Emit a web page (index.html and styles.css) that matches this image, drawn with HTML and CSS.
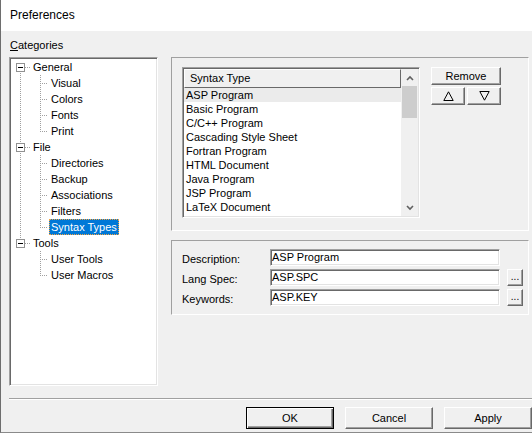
FILE: index.html
```html
<!DOCTYPE html>
<html lang="en">
  <head>
    <meta charset="UTF-8" />
    <title>Preferences</title>
    <link rel="stylesheet" href="styles.css">
  </head>
  <body>
    <div class="window">
      <div class="titlebar">Preferences</div>

      <div class="content">
        <div class="left">
          <div class="caption"><u>C</u>ategories</div>
          <div class="tree">
            <div class="node top first"><span class="tw"><span class="box"></span></span><span class="lbl">General</span></div>
            <div class="node"><span class="pipe"></span><span class="br"></span><span class="lbl">Visual</span></div>
            <div class="node"><span class="pipe"></span><span class="br"></span><span class="lbl">Colors</span></div>
            <div class="node"><span class="pipe"></span><span class="br"></span><span class="lbl">Fonts</span></div>
            <div class="node"><span class="pipe"></span><span class="br end"></span><span class="lbl">Print</span></div>
            <div class="node top"><span class="tw"><span class="box"></span></span><span class="lbl">File</span></div>
            <div class="node"><span class="pipe"></span><span class="br"></span><span class="lbl">Directories</span></div>
            <div class="node"><span class="pipe"></span><span class="br"></span><span class="lbl">Backup</span></div>
            <div class="node"><span class="pipe"></span><span class="br"></span><span class="lbl">Associations</span></div>
            <div class="node"><span class="pipe"></span><span class="br"></span><span class="lbl">Filters</span></div>
            <div class="node"><span class="pipe"></span><span class="br end"></span><span class="lbl selected">Syntax Types</span></div>
            <div class="node top last"><span class="tw"><span class="box"></span></span><span class="lbl">Tools</span></div>
            <div class="node"><span class="pipe none"></span><span class="br"></span><span class="lbl">User Tools</span></div>
            <div class="node"><span class="pipe none"></span><span class="br end"></span><span class="lbl">User Macros</span></div>
          </div>
        </div>

        <div class="right">
          <div class="panel panel-list">
            <div class="list">
              <div class="list-body">
                <div class="list-header">Syntax Type</div>
                <div class="item sel">ASP Program</div>
                <div class="item">Basic Program</div>
                <div class="item">C/C++ Program</div>
                <div class="item">Cascading Style Sheet</div>
                <div class="item">Fortran Program</div>
                <div class="item">HTML Document</div>
                <div class="item">Java Program</div>
                <div class="item">JSP Program</div>
                <div class="item">LaTeX Document</div>
                <div class="item">Modula-2 Program</div>
                <div class="item">Pascal Program</div>
              </div>
              <div class="scroll">
                <div class="arrow">
                  <svg width="8" height="6" viewBox="0 0 8 6"><path d="M1 5 L4 2 L7 5" fill="none" stroke="#606060" stroke-width="1.6"/></svg>
                </div>
                <div class="track"><div class="thumb"></div></div>
                <div class="arrow">
                  <svg width="8" height="6" viewBox="0 0 8 6"><path d="M1 1 L4 4 L7 1" fill="none" stroke="#606060" stroke-width="1.6"/></svg>
                </div>
              </div>
            </div>
            <div class="btncol">
              <button class="btn remove">Remove</button>
              <div class="btnrow">
                <button class="btn small">
                  <svg width="11" height="10" viewBox="0 0 11 10"><path d="M5.5 0.8 L10.2 9.5 L0.8 9.5 Z" fill="none" stroke="#000" stroke-width="1"/></svg>
                </button>
                <button class="btn small">
                  <svg width="11" height="10" viewBox="0 0 11 10"><path d="M0.8 0.5 L10.2 0.5 L5.5 9.2 Z" fill="none" stroke="#000" stroke-width="1"/></svg>
                </button>
              </div>
            </div>
          </div>

          <div class="panel panel-fields">
            <div class="field">
              <label>Description:</label>
              <div class="input">ASP Program</div>
            </div>
            <div class="field">
              <label>Lang Spec:</label>
              <div class="input">ASP.SPC</div>
              <button class="btn dots">...</button>
            </div>
            <div class="field">
              <label>Keywords:</label>
              <div class="input">ASP.KEY</div>
              <button class="btn dots">...</button>
            </div>
          </div>
        </div>
      </div>

      <div class="sep"></div>

      <div class="footer">
        <button class="btn action default">OK</button>
        <button class="btn action">Cancel</button>
        <button class="btn action">Apply</button>
      </div>
    </div>
  </body>
</html>
```

FILE: styles.css
```css
* {
  margin: 0;
  padding: 0;
  box-sizing: border-box;
}
body {
  font-family: "Liberation Sans", Arial, sans-serif;
  font-size: 11px;
  color: #000;
  background: #f0f0f0;
}
.window {
  width: 532px;
  height: 433px;
  display: flex;
  flex-direction: column;
  overflow: hidden;
  border-left: 1px solid #6e6e6e;
  border-bottom: 1px solid #8a8a8a;
}
.titlebar {
  height: 31px;
  flex: none;
  line-height: 30px;
  padding-left: 9px;
  font-size: 12px;
  background: #fff;
}
.content {
  height: 367px;
  flex: none;
  display: flex;
  gap: 13px;
  padding: 7px 0 0 8px;
}
.left {
  width: 149px;
  flex: none;
}
.caption {
  height: 14px;
  line-height: 14px;
  margin-bottom: 5px;
  padding-left: 1px;
}
.tree {
  height: 329px;
  padding: 1px;
  background: #fff;
  border: 1px solid;
  border-color: #a0a0a0 #fff #fff #a0a0a0;
  box-shadow: inset 1px 1px #696969, inset -1px -1px #e3e3e3;
}
.node {
  display: flex;
  align-items: center;
  height: 16px;
  white-space: nowrap;
}
.tw,
.pipe,
.br {
  height: 16px;
  flex: none;
  background-repeat: no-repeat;
}
.tw {
  width: 20px;
  display: flex;
  align-items: center;
  padding-left: 5px;
  background-image: repeating-linear-gradient(to bottom, #a0a0a0 0 1px, transparent 1px 2px),
    repeating-linear-gradient(to right, #a0a0a0 0 1px, transparent 1px 2px);
  background-size: 1px 16px, 6px 1px;
  background-position: 9px 0, 14px 8px;
}
.first .tw {
  background-size: 1px 8px, 6px 1px;
  background-position: 9px 8px, 14px 8px;
}
.last .tw {
  background-size: 1px 8px, 6px 1px;
  background-position: 9px 0, 14px 8px;
}
.box {
  width: 9px;
  height: 9px;
  border: 1px solid #919191;
  background: linear-gradient(#000, #000) center / 5px 1px no-repeat, #fff;
}
.pipe {
  width: 20px;
  background-image: repeating-linear-gradient(to bottom, #a0a0a0 0 1px, transparent 1px 2px);
  background-size: 1px 16px;
  background-position: 9px 0;
}
.pipe.none {
  background: none;
}
.br {
  width: 18px;
  background-image: repeating-linear-gradient(to bottom, #a0a0a0 0 1px, transparent 1px 2px),
    repeating-linear-gradient(to right, #a0a0a0 0 1px, transparent 1px 2px);
  background-size: 1px 16px, 8px 1px;
  background-position: 9px 0, 9px 8px;
}
.br.end {
  background-size: 1px 9px, 8px 1px;
}
.lbl {
  padding: 0 2px;
  line-height: 16px;
  height: 16px;
}
.lbl.selected {
  background: #0078d7;
  color: #fff;
  outline: 1px dotted #f7a440;
  outline-offset: -1px;
}

.right {
  width: 358px;
  flex: none;
  display: flex;
  flex-direction: column;
  gap: 9px;
  padding-top: 19px;
}
.panel {
  border: 1px solid;
  border-color: #a0a0a0 #fff #fff #a0a0a0;
}
.panel-list {
  height: 174px;
  display: flex;
  align-items: flex-start;
  gap: 11px;
  padding: 9px 0 0 10px;
}
.list {
  width: 238px;
  height: 151px;
  display: flex;
  padding: 1px;
  background: #fff;
  border: 1px solid;
  border-color: #a0a0a0 #fff #fff #a0a0a0;
  box-shadow: inset 1px 1px #696969, inset -1px -1px #e3e3e3;
}
.list-body {
  flex: 1;
  overflow: hidden;
}
.list-header {
  height: 19px;
  line-height: 17px;
  padding-left: 5px;
  background: #f0f0f0;
  border: 1px solid;
  border-color: #fff #696969 #696969 #fff;
}
.item {
  height: 14px;
  line-height: 14px;
  padding-left: 2px;
  white-space: nowrap;
}
.item.sel {
  background: #ebebeb;
}
.scroll {
  width: 17px;
  flex: none;
  display: flex;
  flex-direction: column;
  background: #f0f0f0;
}
.arrow {
  height: 17px;
  display: flex;
  align-items: center;
  justify-content: center;
}
.track {
  flex: 1;
}
.thumb {
  height: 32px;
  margin: 0 1px;
  background: #cdcdcd;
}

.btn {
  font: inherit;
  color: #000;
  background: #f0f0f0;
  border: 1px solid;
  border-color: #fff #696969 #696969 #fff;
  box-shadow: inset -1px -1px #a0a0a0;
  display: flex;
  align-items: center;
  justify-content: center;
}
.btncol {
  width: 70px;
  display: flex;
  flex-direction: column;
  gap: 2px;
}
.remove {
  height: 18px;
}
.btnrow {
  display: flex;
  gap: 2px;
}
.small {
  width: 34px;
  height: 18px;
}

.panel-fields {
  height: 75px;
  display: flex;
  flex-direction: column;
  gap: 3px;
  padding: 8px 0 0 10px;
}
.field {
  height: 17px;
  display: flex;
  align-items: center;
}
.field label {
  width: 88px;
  padding-top: 3px;
}
.input {
  width: 230px;
  height: 17px;
  line-height: 15px;
  padding-left: 1px;
  background: #fff;
  border: 1px solid;
  border-color: #a0a0a0 #fff #fff #a0a0a0;
  box-shadow: inset 1px 1px #696969, inset -1px -1px #e3e3e3;
}
.dots {
  width: 16px;
  height: 17px;
  margin-left: 7px;
  align-items: flex-end;
  padding-bottom: 3px;
  font-size: 10px;
}

.sep {
  height: 2px;
  flex: none;
  margin-left: 8px;
  border-top: 1px solid #a0a0a0;
  border-bottom: 1px solid #fff;
}
.footer {
  display: flex;
  justify-content: flex-end;
  gap: 11px;
  padding: 7px 0 0 0;
}
.action {
  width: 88px;
  height: 22px;
}
.action.default {
  border-color: #000;
  box-shadow: inset 1px 1px #fff, inset -1px -1px #696969, inset -2px -2px #a0a0a0;
}
```
